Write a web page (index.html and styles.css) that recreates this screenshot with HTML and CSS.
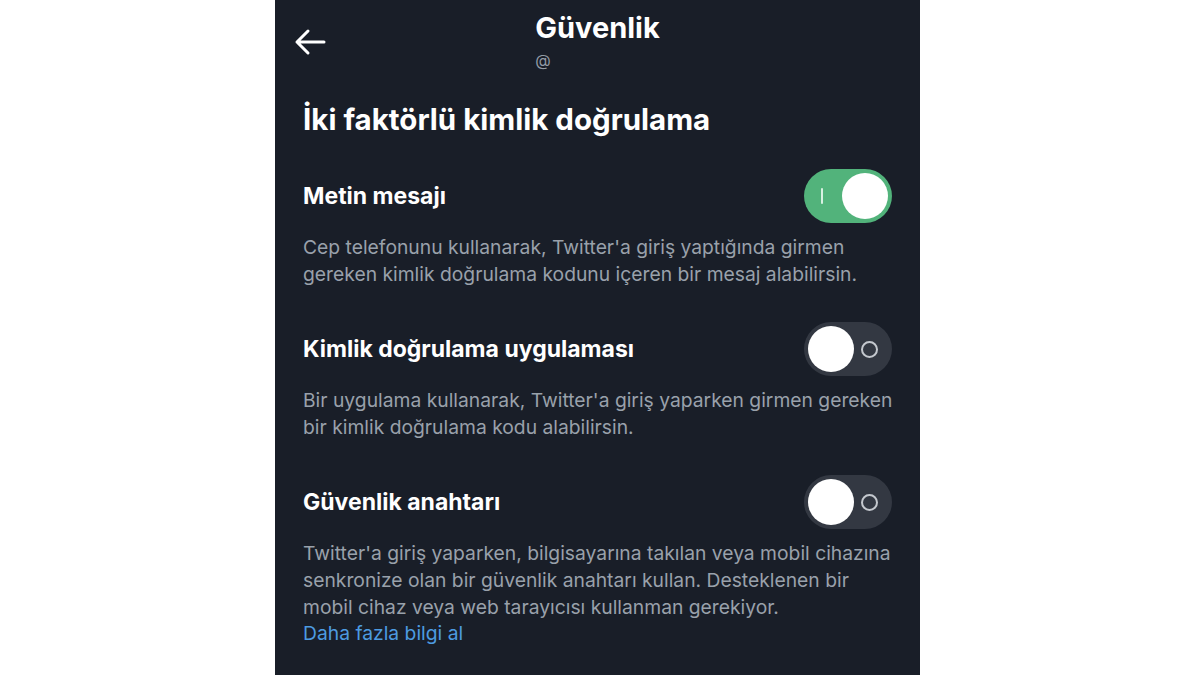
FILE: index.html
```html
<!DOCTYPE html>
<html lang="tr">
<head>
	<meta charset="utf-8">
	<title>Güvenlik</title>
	<link rel="stylesheet" href="styles.css">
</head>
<body>
	<div class="screen">

		<!-- top bar: back button and centered title -->
		<div class="topbar">
			<a class="back" href="#" aria-label="Geri">
				<svg width="32" height="28" viewBox="0 0 32 28">
					<path d="M30 14H3M14 3L3 14l11 11" fill="none" stroke="#fff" stroke-width="3" stroke-linecap="round" stroke-linejoin="round"/>
				</svg>
			</a>
			<div class="title-block">
				<div class="title">Güvenlik</div>
				<div class="handle">@</div>
			</div>
		</div>

		<h1 class="section-title">İki faktörlü kimlik doğrulama</h1>

		<div class="options">
			<div class="option">
				<div class="option-head">
					<span class="option-name">Metin mesajı</span>
					<span class="switch on"><span class="mark"></span><span class="knob"></span></span>
				</div>
				<p class="option-text">Cep telefonunu kullanarak, Twitter'a giriş yaptığında girmen gereken kimlik doğrulama kodunu içeren bir mesaj alabilirsin.</p>
			</div>

			<div class="option">
				<div class="option-head">
					<span class="option-name">Kimlik doğrulama uygulaması</span>
					<span class="switch"><span class="knob"></span><span class="mark"></span></span>
				</div>
				<p class="option-text">Bir uygulama kullanarak, Twitter'a giriş yaparken girmen gereken bir kimlik doğrulama kodu alabilirsin.</p>
			</div>

			<div class="option">
				<div class="option-head">
					<span class="option-name">Güvenlik anahtarı</span>
					<span class="switch"><span class="knob"></span><span class="mark"></span></span>
				</div>
				<p class="option-text">Twitter'a giriş yaparken, bilgisayarına takılan veya mobil cihazına senkronize olan bir güvenlik anahtarı kullan. Desteklenen bir mobil cihaz veya web tarayıcısı kullanman gerekiyor.<br><a class="more" href="#">Daha fazla bilgi al</a></p>
			</div>
		</div>

	</div>
</body>
</html>
```

FILE: styles.css
```css
html, body {
	margin: 0;
	padding: 0;
	width: 100%;
	height: 100%;
	overflow: hidden;
}

body {
	background-color: #ffffff;
	font-family: Inter, Roboto, sans-serif;
}

.screen {
	width: 645px;
	height: 100%;
	margin-left: 275px;
	background-color: #191e28;
	color: #ffffff;
	padding: 0 28px;
	box-sizing: border-box;
}

/* top bar */
.topbar {
	position: relative;
	display: flex;
	justify-content: center;
	padding-top: 10px;
	height: 88px;
	box-sizing: border-box;
}
.back {
	position: absolute;
	left: -9px;
	top: 28px;
	display: block;
	line-height: 0;
}
.title-block {
	display: inline-flex;
	flex-direction: column;
	align-items: flex-start;
}
.title {
	font-size: 29px;
	font-weight: bold;
	line-height: 36px;
}
.handle {
	font-size: 16px;
	color: #939ba5;
	line-height: 20px;
	margin-top: 4px;
}

.section-title {
	font-size: 29.5px;
	font-weight: bold;
	line-height: 34px;
	margin: 14px 0 33px;
}

/* option rows */
.options {
	display: flex;
	flex-direction: column;
	gap: 35px;
}
.option-head {
	display: flex;
	justify-content: space-between;
	align-items: center;
	height: 54px;
}
.option-name {
	font-size: 23px;
	font-weight: bold;
}
.option-text {
	margin: 11px -4px 0 0;
	font-size: 19.3px;
	line-height: 26.6px;
	color: #99a1ab;
}
.more {
	color: #4d9be0;
	text-decoration: none;
}

/* toggle switch */
.switch {
	width: 88px;
	height: 54px;
	border-radius: 27px;
	background-color: #333842;
	display: flex;
	align-items: center;
	justify-content: space-between;
	padding: 0 4px;
	box-sizing: border-box;
	flex-shrink: 0;
}
.switch .knob {
	width: 46px;
	height: 46px;
	border-radius: 50%;
	background-color: #ffffff;
}
.switch .mark {
	width: 13px;
	height: 13px;
	border: 2px solid #c4c8ce;
	border-radius: 50%;
	margin-right: 10px;
}
.switch.on {
	background-color: #52b37b;
	padding-left: 17px;
}
.switch.on .mark {
	width: 2px;
	height: 16px;
	border: none;
	border-radius: 1px;
	background-color: #d8f1e2;
	margin: 0;
}
```
